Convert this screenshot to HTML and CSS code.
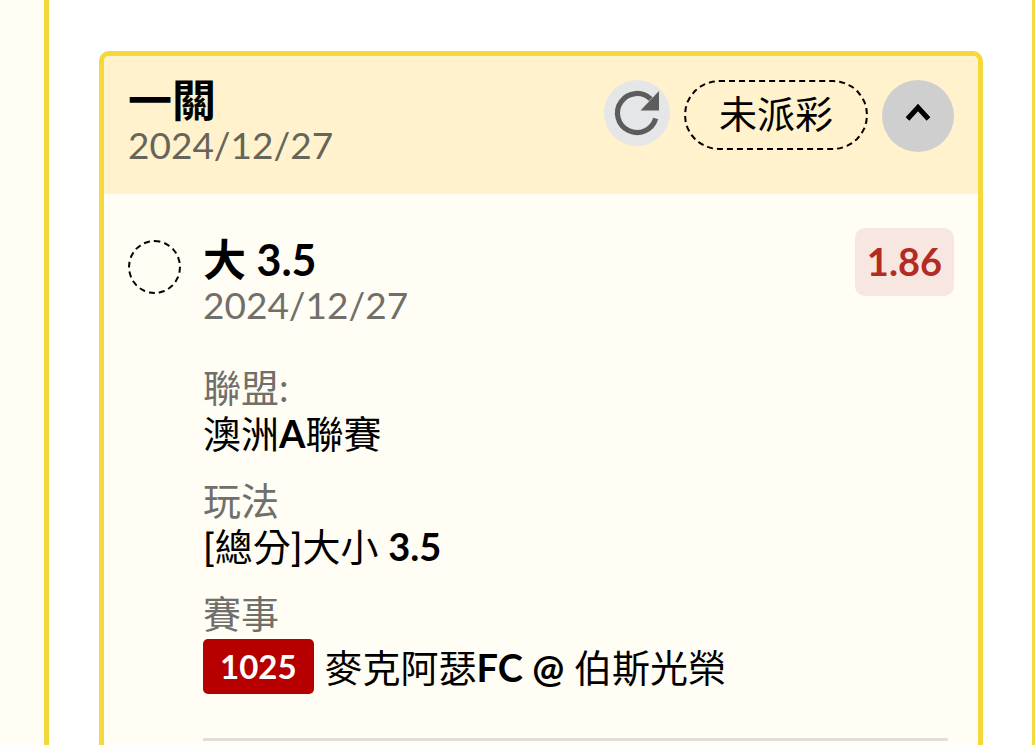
FILE: index.html
```html
<!DOCTYPE html>
<html lang="zh-Hant">
<head>
<meta charset="utf-8">
<meta name="viewport" content="width=device-width, initial-scale=1">
<title>一關</title>
<link rel="stylesheet" href="styles.css">
</head>
<body>
<main class="panel">
  <article class="ticket">
    <header class="ticket-header">
      <div class="heading">
        <h1 class="title">一關</h1>
        <time class="date" datetime="2024-12-27">2024/12/27</time>
      </div>
      <div class="actions">
        <button class="refresh" type="button" aria-label="重新整理">
          <svg viewBox="0 0 66 66" aria-hidden="true">
            <path d="M46.8 19.2A19.5 19.5 0 1 0 51.7 38.5" fill="none" stroke="#5c5c5c" stroke-width="5.200"/>
            <path d="M55 11V30.500H36.500Z" fill="#5c5c5c"/>
          </svg>
        </button>
        <span class="status">未派彩</span>
        <button class="collapse" type="button" aria-label="收合" aria-expanded="true">
          <svg viewBox="0 0 72 72" aria-hidden="true">
            <path d="M25.500 39L36 27.500L46.500 39" fill="none" stroke="#000" stroke-width="5"/>
          </svg>
        </button>
      </div>
    </header>
    <section class="bet">
      <span class="marker"></span>
      <div class="bet-body">
        <div class="bet-top">
          <div class="heading">
            <h2 class="title bet-title">大 3.5</h2>
            <time class="date" datetime="2024-12-27">2024/12/27</time>
          </div>
          <span class="odds">1.86</span>
        </div>
        <dl class="details">
          <div>
            <dt>聯盟:</dt>
            <dd>澳洲<b>A</b>聯賽</dd>
          </div>
          <div>
            <dt>玩法</dt>
            <dd><b class="mid">[</b>總分<b class="mid">]</b>大小 <b>3.5</b></dd>
          </div>
          <div>
            <dt>賽事</dt>
            <dd class="match"><span class="code">1025</span><span>麥克阿瑟<b>FC @</b> 伯斯光榮</span></dd>
          </div>
        </dl>
        <hr class="rule">
      </div>
    </section>
  </article>
</main>
</body>
</html>
```
FILE: styles.css
```css
* {
  box-sizing: border-box;
}

body {
  margin: 0;
  background: #fffdf4;
  color: #000;
  font-family: Lato, "Noto Sans CJK TC", sans-serif;
  font-size: 38px;
  line-height: 46px;
}

.panel {
  display: flex;
  min-height: 100vh;
  margin-left: 44px;
  padding: 51px 49px 0 50px;
  border-left: 5px solid #f3d83c;
  border-right: 3px solid #f8d93a;
  background: #fff;
}

.ticket {
  flex: 1;
  min-width: 0;
  border: 5px solid #f5d83a;
  border-bottom: 0;
  border-radius: 10px 10px 0 0;
  background: #fffdf4;
}

.ticket-header {
  display: flex;
  justify-content: space-between;
  align-items: flex-start;
  padding: 21px 24px 27px;
  border-radius: 5px 5px 0 0;
  background: #fff2cc;
}

.title {
  margin: 0;
  font-size: 44px;
  font-weight: 700;
  line-height: 46px;
}

.bet-title {
  font-size: 43px;
}

.date {
  display: block;
  color: #66655a;
  font-size: 37px;
  line-height: 44px;
}

.actions {
  display: flex;
  align-items: flex-start;
  gap: 14px;
  padding-top: 3px;
}

button {
  padding: 0;
  border: 0;
  border-radius: 50%;
  cursor: pointer;
}

button svg {
  display: block;
  width: 100%;
}

.refresh {
  width: 66px;
  height: 66px;
  background: #e5e6e8;
}

.collapse {
  width: 72px;
  height: 72px;
  background: #cfcfcf;
}

.status {
  padding: 8px 33px 12px;
  border: 2px dashed #000;
  border-radius: 35px;
}

.bet {
  display: flex;
  gap: 22px;
  padding: 34px 24px 0;
}

.marker {
  flex: none;
  width: 53px;
  height: 54px;
  margin-top: 12px;
  border: 2px dashed #000;
  border-radius: 50%;
}

.bet-body {
  flex: 1;
  min-width: 0;
}

.bet-top {
  display: flex;
  justify-content: space-between;
  align-items: flex-start;
}

.bet-top .heading {
  padding-top: 9px;
}

.bet-top .date {
  color: #706f6a;
}

.odds {
  padding: 10px 12px 12px;
  border-radius: 10px;
  background: #f8e7e1;
  color: #b32b23;
  font-weight: 700;
}

.details {
  display: grid;
  gap: 21px;
  margin: 37px 0 44px;
}

dt {
  color: #706f6a;
}

dd {
  margin: 0;
}

b {
  font-weight: 700;
}

.mid {
  font-weight: 500;
}

.match {
  display: flex;
  align-items: center;
  gap: 11px;
  padding-top: 3px;
}

.code {
  padding: 5px 17px;
  border-radius: 5px;
  background: #b60000;
  color: #fff;
  font-size: 33px;
  font-weight: 700;
  line-height: 45px;
}

.rule {
  height: 3px;
  margin: 0 6px 0 0;
  border: 0;
  background: #e3dfd8;
}
```
